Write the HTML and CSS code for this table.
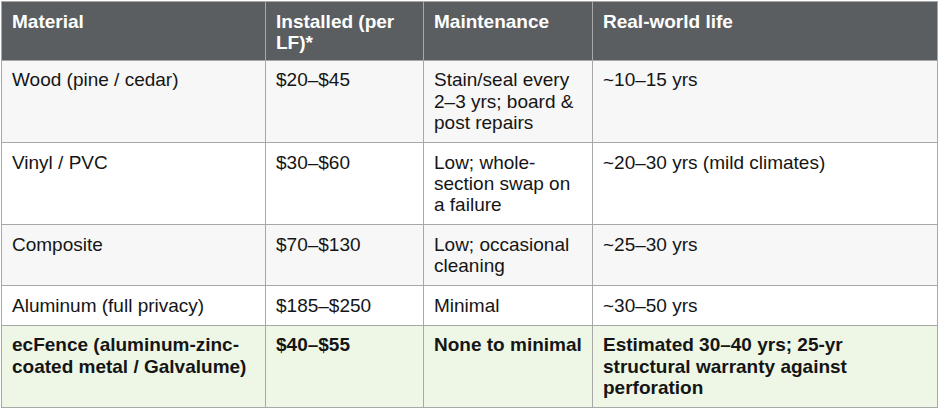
FILE: index.html
```html
<!DOCTYPE html>
<html lang="en">
<head>
<meta charset="utf-8">
<title>Fence materials comparison</title>
<link rel="stylesheet" href="styles.css">
</head>
<body>
<table class="compare">
  <colgroup>
    <col class="c1">
    <col class="c2">
    <col class="c3">
    <col class="c4">
  </colgroup>
  <thead>
    <tr>
      <th>Material</th>
      <th>Installed (per LF)*</th>
      <th>Maintenance</th>
      <th>Real-world life</th>
    </tr>
  </thead>
  <tbody>
    <tr class="alt">
      <td>Wood (pine / cedar)</td>
      <td>$20–$45</td>
      <td>Stain/seal every 2–3 yrs; board &amp; post repairs</td>
      <td>~10–15 yrs</td>
    </tr>
    <tr>
      <td>Vinyl / PVC</td>
      <td>$30–$60</td>
      <td>Low; whole-section swap on a failure</td>
      <td>~20–30 yrs (mild climates)</td>
    </tr>
    <tr class="alt">
      <td>Composite</td>
      <td>$70–$130</td>
      <td>Low; occasional cleaning</td>
      <td>~25–30 yrs</td>
    </tr>
    <tr>
      <td>Aluminum (full privacy)</td>
      <td>$185–$250</td>
      <td>Minimal</td>
      <td>~30–50 yrs</td>
    </tr>
    <tr class="featured">
      <td>ecFence (aluminum-zinc-coated metal / Galvalume)</td>
      <td>$40–$55</td>
      <td>None to minimal</td>
      <td>Estimated 30–40 yrs; 25-yr structural warranty against perforation</td>
    </tr>
  </tbody>
</table>
</body>
</html>
```
FILE: styles.css
```css
html, body {
  margin: 0;
  padding: 0;
  background: #ffffff;
}

body {
  padding: 1px 0 0 1px;
  font-family: "Liberation Sans", Arial, sans-serif;
  font-size: 19px;
  line-height: 21.3px;
  color: #151515;
}

.compare {
  border-collapse: collapse;
  table-layout: fixed;
  width: 936px;
}

.c1 { width: 264px; }
.c2 { width: 158px; }
.c3 { width: 169px; }
.c4 { width: 345px; }

.compare th,
.compare td {
  border: 1px solid #a8a8a8;
  text-align: left;
  vertical-align: top;
  padding: 8.7px 10px;
}

.compare th {
  background: #5b5e61;
  color: #ffffff;
  font-weight: bold;
  padding-top: 9px;
  padding-bottom: 6px;
}

.compare tbody tr {
  background: #ffffff;
}

.compare tbody tr.alt {
  background: #f7f7f7;
}

.compare tbody tr.featured {
  background: #eef7e6;
  font-weight: bold;
}
```
